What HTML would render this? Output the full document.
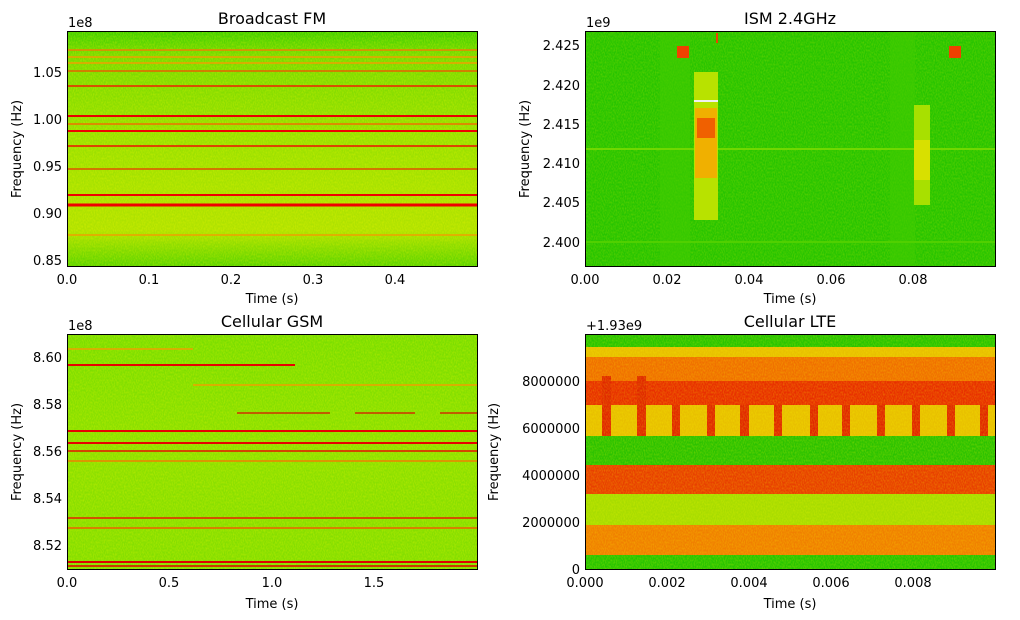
<!DOCTYPE html>
<html><head><meta charset="utf-8"><style>
body{margin:0;background:#fff;}
svg{display:block;font-family:"DejaVu Sans","Liberation Sans",sans-serif;}
</style></head><body>
<svg width="1020" height="620" viewBox="0 0 1020 620" xmlns="http://www.w3.org/2000/svg">
<defs>
<filter id="nz" x="0" y="0" width="100%" height="100%">
<feTurbulence type="fractalNoise" baseFrequency="0.9 0.5" numOctaves="1" seed="3"/>
<feColorMatrix type="matrix" values="0 0 0 0 1  0 0 0 0 1  0 0 0 0 0  0 0 0 -1.6 1.05"/>
</filter>
<linearGradient id="g1" x1="0" y1="0" x2="0" y2="1">
<stop offset="0" stop-color="#3fd000"/><stop offset="0.1" stop-color="#78da00"/>
<stop offset="0.45" stop-color="#98e000"/><stop offset="0.7" stop-color="#aae200"/>
<stop offset="0.85" stop-color="#b0e200"/><stop offset="1" stop-color="#5cd400"/>
</linearGradient>
<linearGradient id="g3" x1="0" y1="0" x2="0" y2="1">
<stop offset="0" stop-color="#7ade00"/><stop offset="0.5" stop-color="#8ee000"/><stop offset="1" stop-color="#84de00"/>
</linearGradient>
</defs>

<!-- Panel 1 -->
<rect x="67" y="31" width="410" height="235" fill="url(#g1)"/>
<rect x="67" y="31" width="410" height="235" filter="url(#nz)" opacity="0.35"/>
<g stroke-width="1.5">
<line x1="67" x2="477" y1="50" y2="50" stroke="#f08000"/>
<line x1="67" x2="477" y1="57" y2="57" stroke="#f0a000"/>
<line x1="67" x2="477" y1="63" y2="63" stroke="#f0a000"/>
<line x1="67" x2="477" y1="71" y2="71" stroke="#e86000"/>
<line x1="67" x2="477" y1="86" y2="86" stroke="#f02000"/>
<line x1="67" x2="477" y1="116" y2="116" stroke="#e80000" stroke-width="2"/>
<line x1="67" x2="477" y1="124" y2="124" stroke="#f07000"/>
<line x1="67" x2="477" y1="131" y2="131" stroke="#f00000" stroke-width="2"/>
<line x1="67" x2="477" y1="146" y2="146" stroke="#f01000"/>
<line x1="67" x2="477" y1="169" y2="169" stroke="#e05000"/>
<line x1="67" x2="477" y1="195" y2="195" stroke="#f00000" stroke-width="2"/>
<line x1="67" x2="477" y1="205" y2="205" stroke="#f00000" stroke-width="3"/>
<line x1="67" x2="477" y1="235" y2="235" stroke="#f0a000"/>
</g>
<rect x="67.5" y="31.5" width="410" height="235" fill="none" stroke="#000"/>

<!-- Panel 2 -->
<rect x="585" y="31" width="410" height="235" fill="#28c400"/>
<rect x="585" y="31" width="410" height="235" filter="url(#nz)" opacity="0.25"/>
<rect x="660" y="31" width="30" height="235" fill="#40cc00" opacity="0.6"/>
<rect x="890" y="31" width="25" height="235" fill="#40cc00" opacity="0.6"/>
<line x1="585" x2="995" y1="149" y2="149" stroke="#70d800" stroke-width="2"/>
<line x1="585" x2="995" y1="242" y2="242" stroke="#50d000" stroke-width="2"/>
<rect x="694" y="72" width="24" height="148" fill="#b8e200"/>
<rect x="694" y="100" width="24" height="2" fill="#f0f0f0"/>
<rect x="695" y="108" width="22" height="70" fill="#f0b000"/>
<rect x="697" y="118" width="18" height="20" fill="#f06000"/>
<rect x="914" y="105" width="16" height="100" fill="#a8e000"/>
<rect x="914" y="140" width="16" height="40" fill="#d8e000"/>
<rect x="677" y="46" width="12" height="12" fill="#f04000"/>
<rect x="949" y="46" width="12" height="12" fill="#f04000"/>
<rect x="716" y="33" width="2" height="10" fill="#f04000"/>
<rect x="585.5" y="31.5" width="410" height="235" fill="none" stroke="#000"/>

<!-- Panel 3 -->
<rect x="67" y="334" width="410" height="235" fill="url(#g3)"/>
<rect x="67" y="334" width="410" height="235" filter="url(#nz)" opacity="0.35"/>
<g stroke-width="1.5">
<line x1="67" x2="193" y1="349" y2="349" stroke="#f0a000"/>
<line x1="67" x2="295" y1="365" y2="365" stroke="#e80000" stroke-width="2"/>
<line x1="193" x2="477" y1="385" y2="385" stroke="#f0a000"/>
<line x1="237" x2="330" y1="413" y2="413" stroke="#d03000"/>
<line x1="355" x2="415" y1="413" y2="413" stroke="#d03000"/>
<line x1="440" x2="477" y1="413" y2="413" stroke="#d03000"/>
<line x1="67" x2="477" y1="431" y2="431" stroke="#e80000" stroke-width="2"/>
<line x1="67" x2="477" y1="443" y2="443" stroke="#e80000" stroke-width="2"/>
<line x1="67" x2="477" y1="451" y2="451" stroke="#e81000"/>
<line x1="67" x2="477" y1="461" y2="461" stroke="#f08000"/>
<line x1="67" x2="477" y1="518" y2="518" stroke="#e82000"/>
<line x1="67" x2="477" y1="528" y2="528" stroke="#f06000"/>
<line x1="67" x2="477" y1="562" y2="562" stroke="#e00000" stroke-width="2"/>
<line x1="67" x2="477" y1="566" y2="566" stroke="#e00000"/>
</g>
<rect x="67.5" y="334.5" width="410" height="235" fill="none" stroke="#000"/>

<!-- Panel 4 -->
<rect x="585" y="334" width="410" height="235" fill="#f0a000"/>
<rect x="585" y="334" width="410" height="13" fill="#28c400"/>
<rect x="585" y="347" width="410" height="10" fill="#e8c000"/>
<rect x="585" y="357" width="410" height="24" fill="#f07000"/>
<rect x="585" y="381" width="410" height="24" fill="#e83000"/>
<rect x="585" y="405" width="410" height="31" fill="#e8c000"/>
<g fill="#e02800">
<rect x="602" y="376" width="9" height="60"/><rect x="637" y="376" width="9" height="60"/>
<rect x="672" y="405" width="8" height="31"/><rect x="707" y="405" width="8" height="31"/>
<rect x="740" y="405" width="9" height="31"/><rect x="774" y="405" width="8" height="31"/>
<rect x="810" y="405" width="8" height="31"/><rect x="842" y="405" width="8" height="31"/>
<rect x="877" y="405" width="8" height="31"/><rect x="912" y="405" width="8" height="31"/>
<rect x="947" y="405" width="8" height="31"/><rect x="980" y="405" width="8" height="31"/>
</g>
<rect x="585" y="436" width="410" height="29" fill="#2cc200"/>
<rect x="585" y="465" width="410" height="29" fill="#e84000"/>
<rect x="585" y="494" width="410" height="31" fill="#a8dc00"/>
<rect x="585" y="525" width="410" height="30" fill="#f08000"/>
<rect x="585" y="555" width="410" height="14" fill="#28c400"/>
<rect x="585" y="334" width="410" height="235" filter="url(#nz)" opacity="0.3"/>
<rect x="585.5" y="334.5" width="410" height="235" fill="none" stroke="#000"/>

<!-- Text -->
<g font-size="16" text-anchor="middle" fill="#000">
<text x="272" y="24">Broadcast FM</text>
<text x="790" y="24">ISM 2.4GHz</text>
<text x="272" y="327">Cellular GSM</text>
<text x="790" y="327">Cellular LTE</text>
</g>
<g font-size="13" fill="#000" text-anchor="middle">
<text x="272" y="303">Time (s)</text>
<text x="790" y="303">Time (s)</text>
<text x="272" y="608">Time (s)</text>
<text x="790" y="608">Time (s)</text>
<text transform="translate(21,149) rotate(-90)">Frequency (Hz)</text>
<text transform="translate(529,149) rotate(-90)">Frequency (Hz)</text>
<text transform="translate(21,452) rotate(-90)">Frequency (Hz)</text>
<text transform="translate(498,452) rotate(-90)">Frequency (Hz)</text>
</g>
<g font-size="13" fill="#000">
<text x="68" y="27">1e8</text>
<text x="586" y="27">1e9</text>
<text x="68" y="330">1e8</text>
<text x="586" y="330">+1.93e9</text>
</g>
<g font-size="13" fill="#000" text-anchor="end">
<text x="62" y="77">1.05</text><text x="62" y="124">1.00</text><text x="62" y="171">0.95</text><text x="62" y="218">0.90</text><text x="62" y="265">0.85</text>
<text x="580" y="50">2.425</text><text x="580" y="90">2.420</text><text x="580" y="129">2.415</text><text x="580" y="168">2.410</text><text x="580" y="207">2.405</text><text x="580" y="247">2.400</text>
<text x="62" y="362">8.60</text><text x="62" y="409">8.58</text><text x="62" y="456">8.56</text><text x="62" y="503">8.54</text><text x="62" y="550">8.52</text>
<text x="580" y="386">8000000</text><text x="580" y="433">6000000</text><text x="580" y="480">4000000</text><text x="580" y="527">2000000</text><text x="580" y="574">0</text>
</g>
<g font-size="13" fill="#000" text-anchor="middle">
<text x="67" y="284">0.0</text><text x="149" y="284">0.1</text><text x="231" y="284">0.2</text><text x="313" y="284">0.3</text><text x="395" y="284">0.4</text>
<text x="585" y="284">0.00</text><text x="667" y="284">0.02</text><text x="749" y="284">0.04</text><text x="831" y="284">0.06</text><text x="913" y="284">0.08</text>
<text x="67" y="587">0.0</text><text x="169" y="587">0.5</text><text x="272" y="587">1.0</text><text x="374" y="587">1.5</text>
<text x="585" y="587">0.000</text><text x="667" y="587">0.002</text><text x="749" y="587">0.004</text><text x="831" y="587">0.006</text><text x="913" y="587">0.008</text>
</g>
</svg>
</body></html>
